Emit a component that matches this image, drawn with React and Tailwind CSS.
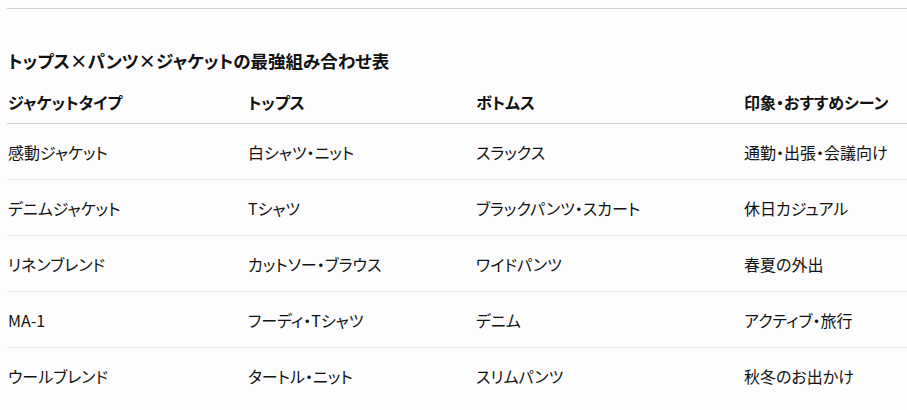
const rows = [
  ['感動ジャケット', '白シャツ・ニット', 'スラックス', '通勤・出張・会議向け'],
  ['デニムジャケット', 'Tシャツ', 'ブラックパンツ・スカート', '休日カジュアル'],
  ['リネンブレンド', 'カットソー・ブラウス', 'ワイドパンツ', '春夏の外出'],
  ['MA-1', 'フーディ・Tシャツ', 'デニム', 'アクティブ・旅行'],
  ['ウールブレンド', 'タートル・ニット', 'スリムパンツ', '秋冬のお出かけ'],
];

const heads = ['ジャケットタイプ', 'トップス', 'ボトムス', '印象・おすすめシーン'];

const cols = 'grid grid-cols-[240px_228px_268px_1fr]';

export default function App() {
  return (
    <div className="min-h-screen bg-[#fdfdfd] pl-[7px] pt-2 text-[#111] font-['Noto_Sans_CJK_JP','Noto_Sans',sans-serif] [font-feature-settings:'palt']">
      <div className="border-t border-[#cfcfcf]" />
      <h3 className="mt-[37px] pl-px text-[17.5px] font-bold leading-[30px]">
        トップス×パンツ×ジャケットの最強組み合わせ表
      </h3>
      <div className={`${cols} h-[48px] items-center border-b border-[#cfcfcf] pt-[5px] text-[16px] font-bold`}>
        {heads.map((h) => (
          <div key={h} className="pl-px">{h}</div>
        ))}
      </div>
      {rows.map((r, i) => (
        <div
          key={r[0]}
          className={`${cols} h-[56px] items-center text-[16px] ${i < rows.length - 1 ? 'border-b border-[#e8e8e8]' : ''}`}
        >
          {r.map((c, j) => (
            <div key={j} className="pl-px">{c}</div>
          ))}
        </div>
      ))}
    </div>
  );
}
